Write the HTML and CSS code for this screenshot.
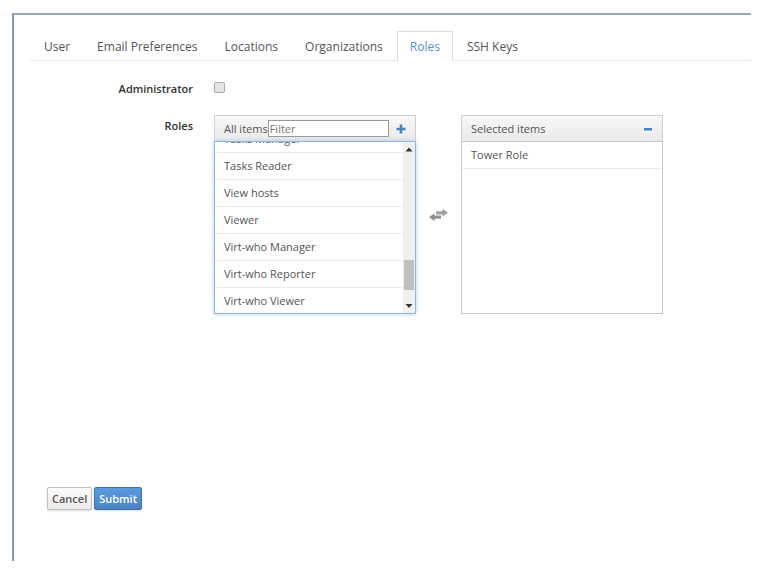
FILE: index.html
```
<!DOCTYPE html>
<html lang="en">

<head>
  <meta charset="UTF-8">
  <meta name="viewport" content="width=device-width, initial-scale=1.0">
  <title>Edit User</title>
  <link rel="stylesheet" href="styles.css">
</head>

<body>
  <main>
    <nav class="tabs">
      <a href="#user">User</a>
      <a href="#email">Email Preferences</a>
      <a href="#locations">Locations</a>
      <a href="#organizations">Organizations</a>
      <a href="#roles" class="active">Roles</a>
      <a href="#ssh">SSH Keys</a>
    </nav>

    <form>
      <div class="row">
        <label class="name" for="admin">Administrator</label>
        <input type="checkbox" id="admin">
      </div>

      <div class="row">
        <label class="name" for="filter">Roles</label>
        <div class="picker">
          <div class="box">
            <div class="box-head">
              <span>All items</span>
              <input type="text" id="filter" placeholder="Filter">
              <button type="button" class="icon" aria-label="Add all">
                <svg width="10" height="10" viewBox="0 0 10 10">
                  <path d="M3.7 0.5h2.6v3.2h3.2v2.6H6.3v3.2H3.7V6.3H0.5V3.7h3.2z" fill="#4a80c4" />
                </svg>
              </button>
            </div>
            <div class="list focused">
              <ul class="scrolled">
                <li>Tasks Manager</li>
                <li>Tasks Reader</li>
                <li>View hosts</li>
                <li>Viewer</li>
                <li>Virt-who Manager</li>
                <li>Virt-who Reporter</li>
                <li>Virt-who Viewer</li>
              </ul>
              <div class="scrollbar">
                <svg width="12" height="14" viewBox="0 0 12 14">
                  <path d="M2.500 9.500h7L6 5.500z" fill="#333" />
                </svg>
                <div class="thumb"></div>
                <svg width="12" height="14" viewBox="0 0 12 14">
                  <path d="M2.500 5h7L6 9z" fill="#333" />
                </svg>
              </div>
            </div>
          </div>

          <svg class="swap" width="19" height="14" viewBox="0 0 19 14">
            <path d="M7 3.200h6.500V0.800L19 4.800l-5.500 4V6.500H7z" fill="#a0a0a0" />
            <path d="M12 7.500H5.500V5.200L0 9.200l5.500 4v-2.400H12z" fill="#929292" />
          </svg>

          <div class="box">
            <div class="box-head">
              <span>Selected items</span>
              <button type="button" class="icon" aria-label="Remove all">
                <svg width="10" height="10" viewBox="0 0 10 10">
                  <path d="M1 4h8v2.500H1z" fill="#4a80c4" />
                </svg>
              </button>
            </div>
            <div class="list">
              <ul>
                <li>Tower Role</li>
              </ul>
            </div>
          </div>
        </div>
      </div>

      <div class="actions">
        <button type="button" class="btn">Cancel</button>
        <button type="submit" class="btn primary">Submit</button>
      </div>
    </form>
  </main>
</body>

</html>
```
FILE: styles.css
```
* {
  box-sizing: border-box;
}

body {
  margin: 0;
  padding: 13px 25px 26px 12px;
  background-color: #fff;
  color: #555;
  font-family: "Open Sans", sans-serif;
  font-size: 11px;
}

main {
  min-height: calc(100vh - 39px);
  padding: 16px 0 50px 16px;
  border-top: 2px solid #98a8ba;
  border-left: 2px solid #7c9cb9;
}

.tabs {
  display: flex;
  gap: 1px;
  padding-left: 1px;
  border-bottom: 1px solid #e8e8e8;
}

.tabs a {
  height: 30px;
  margin-bottom: -1px;
  padding: 0 12px;
  border: 1px solid transparent;
  border-bottom: 0;
  color: #555;
  font-size: 12px;
  line-height: 30px;
  text-decoration: none;
}

.tabs .active {
  border-color: #ddd;
  background-color: #fff;
  color: #5b8fd0;
}

.row {
  display: flex;
  align-items: flex-start;
}

.row:first-child {
  height: 54px;
  padding-top: 17px;
}

.name {
  width: 163px;
  margin-right: 21px;
  color: #333;
  font-weight: 600;
  line-height: 22px;
  text-align: right;
}

input[type="checkbox"] {
  appearance: none;
  width: 11px;
  height: 11px;
  margin: 4px 0;
  border: 1px solid #aaa;
  border-radius: 2px;
  background-color: #e4e4e4;
}

.picker {
  display: flex;
  align-items: center;
}

.box {
  width: 202px;
}

.box-head {
  display: flex;
  align-items: center;
  height: 26px;
  padding: 0 9px;
  border: 1px solid #d0d0d0;
  border-bottom: 0;
  background-image: linear-gradient(#f8f8f8, #e9e9e9);
  line-height: 14px;
}

.box-head input {
  width: 121px;
  height: 17px;
  padding: 0 1px;
  border: 1px solid #999;
  font: inherit;
}

.box-head input::placeholder {
  color: #777;
}

.icon {
  display: flex;
  margin-left: auto;
  padding: 0;
  border: 0;
  background: none;
}

.list {
  display: flex;
  height: 173px;
  overflow: hidden;
  border: 1px solid #c8c8c8;
}

.focused {
  border-color: #8fb6e2;
  box-shadow: 0 0 4px #a9cbf0;
}

ul {
  flex: 1;
  margin: 0;
  padding: 0;
  list-style: none;
}

.scrolled {
  margin-top: -16px;
}

li {
  height: 27px;
  padding: 0 9px;
  border-bottom: 1px solid #ececec;
  line-height: 26px;
}

.scrollbar {
  display: flex;
  flex-direction: column;
  justify-content: space-between;
  width: 12px;
  background-color: #f0f0f0;
}

.thumb {
  height: 30px;
  margin: auto 1px 9px;
  background-color: #c0c0c0;
}

.swap {
  margin: 0 13px;
}

.actions {
  display: flex;
  gap: 2px;
  padding: 173px 0 0 17px;
}

.btn {
  height: 23px;
  padding: 0 4px;
  border: 1px solid #c0c0c0;
  border-radius: 2px;
  background-image: linear-gradient(#fbfbfb, #ededed);
  box-shadow: 0 1px 2px #ddd;
  color: #555;
  font: 600 11px "Open Sans", sans-serif;
}

.primary {
  border-color: #3f74b0;
  background-image: linear-gradient(#5b9ade, #4a83c6);
  color: #fff;
}
```
